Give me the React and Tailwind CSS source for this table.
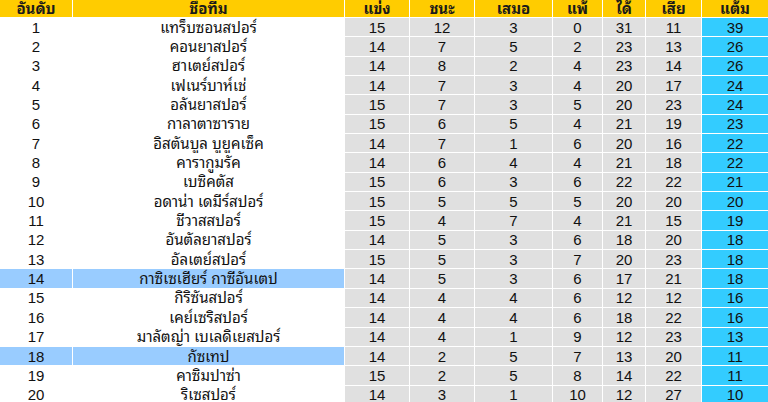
const headers = ["อันดับ", "ชื่อทีม", "แข่ง", "ชนะ", "เสมอ", "แพ้", "ได้", "เสีย", "แต้ม"];

const rows = [
  [1, "แทร็บซอนสปอร์", 15, 12, 3, 0, 31, 11, 39],
  [2, "คอนยาสปอร์", 14, 7, 5, 2, 23, 13, 26],
  [3, "ฮาเตย์สปอร์", 14, 8, 2, 4, 23, 14, 26],
  [4, "เฟเนร์บาห์เช่", 14, 7, 3, 4, 20, 17, 24],
  [5, "อลันยาสปอร์", 15, 7, 3, 5, 20, 23, 24],
  [6, "กาลาตาซาราย", 15, 6, 5, 4, 21, 19, 23],
  [7, "อิสตันบูล บูยูคเซ็ค", 14, 7, 1, 6, 20, 16, 22],
  [8, "คารากูมรัค", 14, 6, 4, 4, 21, 18, 22],
  [9, "เบซิคตัส", 15, 6, 3, 6, 22, 22, 21],
  [10, "อดาน่า เดมีร์สปอร์", 15, 5, 5, 5, 20, 20, 20],
  [11, "ชีวาสสปอร์", 15, 4, 7, 4, 21, 15, 19],
  [12, "อันตัลยาสปอร์", 14, 5, 3, 6, 18, 20, 18],
  [13, "อัลเตย์สปอร์", 15, 5, 3, 7, 20, 23, 18],
  [14, "กาซิเซเฮียร์ กาซีอันเตป", 14, 5, 3, 6, 17, 21, 18],
  [15, "กิริซันสปอร์", 14, 4, 4, 6, 12, 12, 16],
  [16, "เคย์เซริสปอร์", 14, 4, 4, 6, 18, 22, 16],
  [17, "มาลัตญ่า เบเลดิเยสปอร์", 14, 4, 1, 9, 12, 23, 13],
  [18, "กัซเทป", 14, 2, 5, 7, 13, 20, 11],
  [19, "คาซิมปาซ่า", 15, 2, 5, 8, 14, 22, 11],
  [20, "ริเซสปอร์", 14, 3, 1, 10, 12, 27, 10],
];

const highlight = [14, 18];

const cellBg = (row, i) => {
  if (i === 8) return "bg-[#33ccff]";
  if (i >= 2) return "bg-[#e0e0e0]";
  return highlight.includes(row[0]) ? "bg-[#99ccff]" : "bg-white";
};

export default function App() {
  return (
    <div
      className="w-[768px] h-[402px] overflow-hidden bg-white text-[#111] text-[15px]"
      style={{
        fontFamily:
          '"Liberation Sans", Arial, Tahoma, "Noto Sans Thai Looped", "Noto Serif Thai", Loma, Garuda, Waree, "Noto Sans Thai", sans-serif',
      }}
    >
      <div className="grid grid-cols-[72px_271px_64px_64px_77px_49px_42px_55px_66px] grid-rows-[17px] auto-rows-[18.35px] gap-px">
        {headers.map((h) => (
          <div key={h} className="bg-[#ffcc00] flex items-center justify-center font-bold text-[15px] leading-none text-[#1a1a1a]">
            {h}
          </div>
        ))}
        {rows.map((row) =>
          row.map((v, i) => (
            <div key={`${row[0]}-${i}`} className={`${cellBg(row, i)} flex items-center justify-center leading-none`}>
              {v}
            </div>
          ))
        )}
      </div>
    </div>
  );
}
